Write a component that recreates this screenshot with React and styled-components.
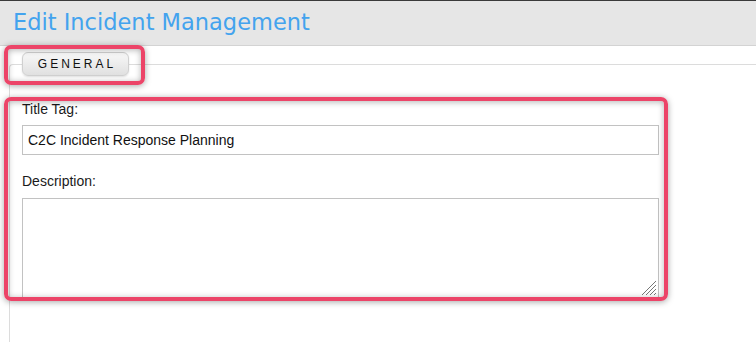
import React from "react";
import styled, { createGlobalStyle } from "styled-components";

const Global = createGlobalStyle`
  html, body { margin: 0; padding: 0; background: #fff; }
  body { font-family: "Liberation Sans", Arial, sans-serif; overflow: hidden; }
`;

const Page = styled.div`
  position: relative;
  width: 756px;
  height: 342px;
  overflow: hidden;
  background: #fff;
`;

const Header = styled.header`
  height: 44px;
  border-top: 1px solid #3a3a3a;
  border-bottom: 1px solid #d3d3d3;
  background: #e6e6e6;
  display: flex;
  align-items: center;
  padding-left: 13px;
`;

const Title = styled.h1`
  margin: 0;
  font-family: "DejaVu Sans", Verdana, sans-serif;
  font-weight: normal;
  font-size: 22.5px;
  color: #43a3ee;
  letter-spacing: 0;
  line-height: 1;
  padding-bottom: 2px;
`;

const Main = styled.main`
  padding-left: 9px;
  padding-top: 6px;
`;

const Fieldset = styled.fieldset`
  margin: 0;
  padding: 0 0 0 12px;
  border: none;
  border-top: 1px solid #dcdcdc;
  border-left: 1px solid #dcdcdc;
  border-top-left-radius: 4px;
  min-width: 0;
  width: 760px;
  box-sizing: border-box;
  height: 300px;
`;

const Legend = styled.legend`
  padding: 0;
  margin: 0;
`;

const TabButton = styled.span`
  display: flex;
  align-items: center;
  justify-content: center;
  box-sizing: border-box;
  width: 107px;
  height: 24px;
  border: 1px solid #d0d0d0;
  border-radius: 6px;
  background: linear-gradient(#f8f8f8, #e0e0e0);
  box-shadow: 0 1px 2px rgba(0, 0, 0, 0.12);
  font-family: "Liberation Sans", Arial, sans-serif;
  font-size: 12px;
  letter-spacing: 3px;
  padding-left: 3px;
  color: #111;
`;

const Form = styled.div`
  display: flex;
  flex-direction: column;
  padding-top: 25px;
  width: 637px;
`;

const Label = styled.label`
  display: block;
  font-family: "Liberation Sans", Arial, sans-serif;
  font-size: 14px;
  line-height: 16px;
  color: #1a1a1a;
  margin-bottom: ${(p) => p.$gap}px;
  margin-top: ${(p) => p.$top || 0}px;
`;

const TextInput = styled.input`
  box-sizing: border-box;
  width: 637px;
  height: 30px;
  border: 1px solid #c2c2c2;
  border-radius: 0;
  padding: 0 5px;
  font-family: "Liberation Sans", Arial, sans-serif;
  font-size: 14px;
  color: #111;
  outline: none;
`;

const AreaWrap = styled.div`
  position: relative;
  width: 637px;
  height: 100px;
`;

const TextArea = styled.textarea`
  box-sizing: border-box;
  display: block;
  width: 637px;
  height: 100px;
  border: 1px solid #c2c2c2;
  border-radius: 0;
  resize: none;
  outline: none;
  font-family: "Liberation Sans", Arial, sans-serif;
  font-size: 14px;
`;

const Grip = styled.svg`
  position: absolute;
  right: 2px;
  bottom: 2px;
`;

const Highlight = styled.div`
  position: absolute;
  left: ${(p) => p.$x}px;
  top: ${(p) => p.$y}px;
  width: ${(p) => p.$w}px;
  height: ${(p) => p.$h}px;
  box-sizing: border-box;
  border: 4px solid #ec4468;
  border-radius: 7px;
  box-shadow: 0 1px 6px rgba(0, 0, 0, 0.35), inset 0 1px 6px rgba(0, 0, 0, 0.3);
  pointer-events: none;
`;

export default function App() {
  return (
    <Page>
      <Global />
      <Header>
        <Title>Edit Incident Management</Title>
      </Header>
      <Main>
        <Fieldset>
          <Legend>
            <TabButton>GENERAL</TabButton>
          </Legend>
          <Form>
            <Label $gap={8}>Title Tag:</Label>
            <TextInput defaultValue="C2C Incident Response Planning" />
            <Label $gap={9} $top={18}>Description:</Label>
            <AreaWrap>
              <TextArea />
              <Grip width="16" height="16" viewBox="0 0 16 16">
                <g stroke="#777" strokeWidth="1">
                  <line x1="1" y1="15" x2="15" y2="1" />
                  <line x1="5" y1="15" x2="15" y2="5" />
                  <line x1="9" y1="15" x2="15" y2="9" />
                  <line x1="13" y1="15" x2="15" y2="13" />
                </g>
              </Grip>
            </AreaWrap>
          </Form>
        </Fieldset>
      </Main>
      <Highlight $x={4} $y={45} $w={141} $h={40} />
      <Highlight $x={4} $y={97} $w={664} $h={204} />
    </Page>
  );
}
